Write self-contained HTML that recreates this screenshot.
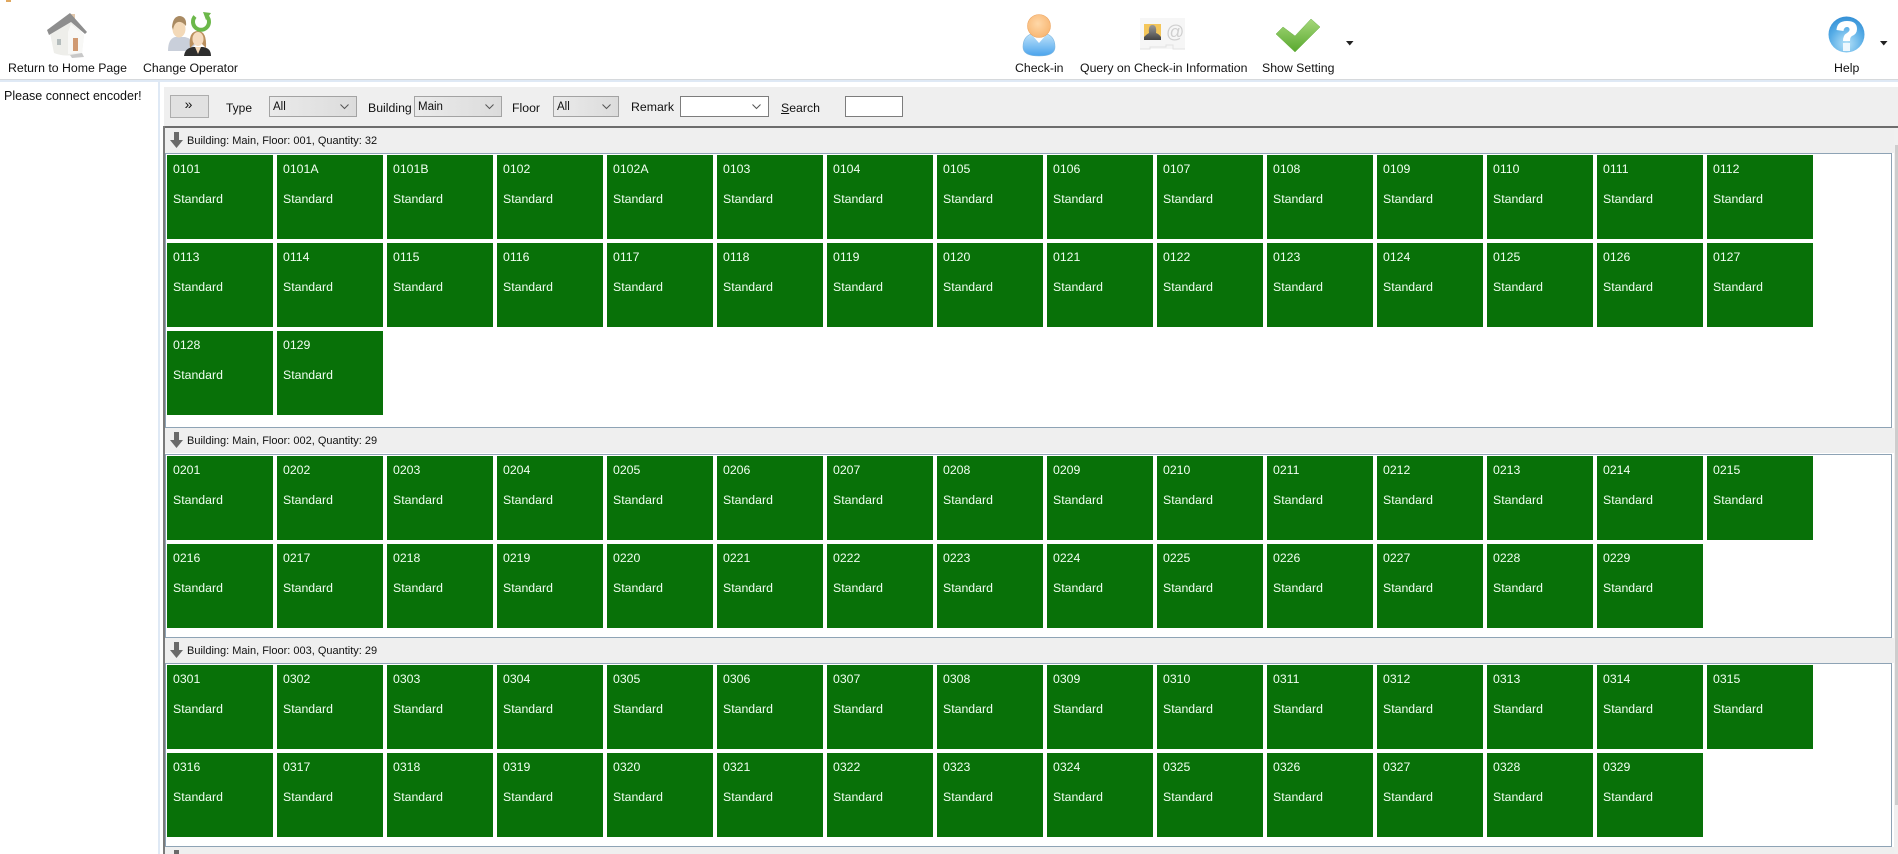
<!DOCTYPE html>
<html><head><meta charset="utf-8"><style>
html,body{margin:0;padding:0;width:1898px;height:854px;overflow:hidden;background:#fff}
body{font-family:"Liberation Sans",sans-serif;font-size:12.3px;color:#111;position:relative}
.a{position:absolute;white-space:nowrap}
.l{position:absolute;white-space:nowrap;line-height:14px}
svg{position:absolute;overflow:visible}
.combo{position:absolute;top:96px;height:19px;border:1px solid #a3a3a3;background:linear-gradient(90deg,#eaeaea,#dcdcdc);font-size:11.5px;line-height:21px;padding-left:3px;box-sizing:content-box}
.combo svg{right:7px;top:7px}
.hdr{position:absolute;left:165px;width:1729px;height:25px;background:#efefef}
.hdr span{position:absolute;left:22px;top:6px;font-size:11px;line-height:14px;white-space:nowrap}
.hdr svg{left:5px;top:4px}
.p{position:absolute;left:165px;width:1725px;border:1px solid #8ea3b5;background:#fff;box-sizing:content-box}
.g{position:absolute;left:1px;top:1px;width:1740px;display:flex;flex-wrap:wrap;gap:4px 4px}
.g b{display:block;position:relative;width:106px;height:84px;background:#087108;color:#f2fff2;font-weight:normal;font-size:12.3px;flex:none}
.g b s{text-decoration:none;position:absolute;left:6px;top:7px;line-height:15px}
.g b i{font-style:normal;position:absolute;left:6px;top:37px;line-height:15px}
</style></head><body>

<div class="a" style="left:6px;top:0;width:5px;height:2px;background:#e0a860"></div>

<svg style="left:46px;top:12px" width="42" height="46" viewBox="0 0 42 46">
<rect x="24" y="2" width="5" height="6" fill="#e2c8ac"/>
<path d="M4 21 L8 41 Q20 46 36 41 L38 23 L24 9 Z" fill="#eeeeea"/>
<path d="M22 42 L36 41 L38 23 L25 12 L22 20Z" fill="#f8f8f6"/>
<path d="M1 18 L24 1 L41 20 L39 22 L25 10 L3 23 Z" fill="#8e8e8e"/>
<rect x="27" y="26" width="5" height="13" fill="#d09a72"/>
<rect x="11" y="27" width="4" height="6" fill="#b4bcbc"/>
<path d="M24 43 L36 41 L38 45 L26 46Z" fill="#c8c8c8"/>
</svg>
<svg style="left:167px;top:12px" width="46" height="46" viewBox="0 0 46 46">
<path d="M1 39 Q1 27 8 25 L18 25 Q26 27 28 33 L22 39 Z" fill="#c9cfda"/>
<ellipse cx="12" cy="17" rx="6.500" ry="8.500" fill="#f3d9b8"/>
<path d="M5 15 Q6 4 13 4 Q20 5 19 14 Q15 9 11 10 Q7 11 6 18Z" fill="#a98a62"/>
<path d="M17 44 Q18 36 26 35 L36 35 Q44 36 44 44Z" fill="#2e2e2e"/>
<path d="M28 35 L31 42 L34 35Z" fill="#f3d7b6"/>
<path d="M23 36 Q21 19 31 19 Q40 19 39 36 L35 32 L27 32Z" fill="#bb905e"/>
<ellipse cx="31" cy="27" rx="5.500" ry="7" fill="#f6dcc0"/>
<path d="M28 4.500 A8 8 0 1 0 40 4.500" fill="none" stroke="#6cb84a" stroke-width="4"/>
<path d="M36 0 L44 1 L39 8Z" fill="#6cb84a"/>
</svg>
<svg style="left:1022px;top:13px" width="34" height="44" viewBox="0 0 34 44">
<defs>
<linearGradient id="bl" x1="0" y1="0" x2="0" y2="1"><stop offset="0" stop-color="#bfe3fb"/><stop offset="1" stop-color="#4aa3ec"/></linearGradient>
<radialGradient id="fc" cx=".45" cy=".4" r=".7"><stop offset="0" stop-color="#ffd8a8"/><stop offset="1" stop-color="#f7b26c"/></radialGradient>
</defs>
<path d="M1 34 Q1 24 9 21 L25 21 Q33 24 33 34 Q33 43 17 43 Q1 43 1 34Z" fill="url(#bl)" stroke="#7cb5de" stroke-width=".6"/>
<path d="M10 22 L17 30 L24 22Z" fill="#fff"/>
<circle cx="17" cy="13" r="11.5" fill="url(#fc)" stroke="#eda765" stroke-width=".6"/>
</svg>
<svg style="left:1140px;top:18px" width="46" height="34" viewBox="0 0 46 34">
<defs><linearGradient id="ps" x1="0" y1="0" x2="0" y2="1"><stop offset="0" stop-color="#9a9a9a"/><stop offset="1" stop-color="#444"/></linearGradient></defs>
<rect x="0" y="0" width="45" height="31" fill="#f6f6f6"/>
<rect x="4" y="6" width="17" height="16" fill="#f4c65a"/>
<path d="M4 22 L4 19 Q7 16 9 15 Q8 7 12.500 7 Q17 7 16 15 Q19 16 21 19 L21 22Z" fill="url(#ps)"/>
<text x="26" y="20" font-family="Liberation Sans" font-size="18" fill="#cfcfcf">@</text>
<path d="M0 31 H10 V29 H26 V27 H33 V31 H45" fill="none" stroke="#e2e2e2"/>
</svg>
<svg style="left:1275px;top:18px" width="46" height="36" viewBox="0 0 46 36">
<defs><linearGradient id="gr" x1="0" y1="0" x2="0" y2="1"><stop offset="0" stop-color="#a6d87a"/><stop offset="1" stop-color="#58a82e"/></linearGradient></defs>
<path d="M1 16 L8 9 L20 18 L36 1 L45 9 L20 34Z" fill="url(#gr)" stroke="#6eb04a" stroke-width=".5"/>
</svg>
<svg style="left:1828px;top:16px" width="38" height="38" viewBox="0 0 38 38">
<defs><radialGradient id="hp" cx=".5" cy=".75" r=".8"><stop offset="0" stop-color="#b6e2f8"/><stop offset=".6" stop-color="#56ace6"/><stop offset="1" stop-color="#2e8ad2"/></radialGradient></defs>
<circle cx="18.500" cy="18.500" r="18" fill="url(#hp)"/>
<path d="M8.500 14 Q9 5 19 5 Q29 5 29 13 Q29 18 24 20 Q22 21 22 25 H15 Q15 19 19 17 Q22 15 21.500 13 Q21 11 19 11 Q16 11 15.500 15Z" fill="#fff"/>
<rect x="15" y="27" width="7" height="8" fill="#eef8fe"/>
</svg>
<svg style="left:1346px;top:41px" width="8" height="5"><path d="M0 0H7.500L3.750 4.500Z" fill="#222"/></svg>
<svg style="left:1880px;top:41px" width="8" height="5"><path d="M0 0H7.500L3.750 4.500Z" fill="#222"/></svg>

<div class="l" style="left:8px;top:61px">Return to Home Page</div>
<div class="l" style="left:143px;top:61px">Change Operator</div>
<div class="l" style="left:1015px;top:61px">Check-in</div>
<div class="l" style="left:1080px;top:61px">Query on Check-in Information</div>
<div class="l" style="left:1262px;top:61px">Show Setting</div>
<div class="l" style="left:1834px;top:61px">Help</div>

<div class="a" style="left:0;top:79px;width:1898px;height:1px;background:#d6d9dc"></div>
<div class="a" style="left:0;top:80px;width:1898px;height:2px;background:#dfe9f5"></div>

<div class="l" style="left:4px;top:89px;font-size:12.5px">Please connect encoder!</div>

<div class="a" style="left:158px;top:82px;width:2px;height:772px;background:#dfe9f5"></div>
<div class="a" style="left:164px;top:87px;width:1734px;height:39px;background:#efefef"></div>
<div class="a" style="left:163px;top:126px;width:1735px;height:2px;background:#6d6d6d"></div>
<div class="a" style="left:163px;top:126px;width:2px;height:728px;background:#7b7b7b"></div>

<div class="a" style="left:170px;top:95px;width:37px;height:21px;border:1px solid #adadad;background:#e1e1e1;font-size:14px;line-height:17px;text-align:center;text-indent:-2px">»</div>
<div class="l" style="left:226px;top:101px;font-size:12px">Type</div>
<div class="combo" style="left:269px;width:83px">All<svg width="9" height="5"><path d="M0.500 0.500L4.500 4.500L8.500 0.500" fill="none" stroke="#555"/></svg></div>
<div class="l" style="left:368px;top:101px">Building</div>
<div class="combo" style="left:414px;width:83px">Main<svg width="9" height="5"><path d="M0.500 0.500L4.500 4.500L8.500 0.500" fill="none" stroke="#555"/></svg></div>
<div class="l" style="left:512px;top:101px">Floor</div>
<div class="combo" style="left:553px;width:61px">All<svg width="9" height="5"><path d="M0.500 0.500L4.500 4.500L8.500 0.500" fill="none" stroke="#555"/></svg></div>
<div class="l" style="left:631px;top:100px">Remark</div>
<div class="combo" style="left:680px;width:84px;background:#fff;border-color:#7d7d7d"><svg width="9" height="5"><path d="M0.500 0.500L4.500 4.500L8.500 0.500" fill="none" stroke="#555"/></svg></div>
<div class="l" style="left:781px;top:101px"><u>S</u>earch</div>
<div class="a" style="left:845px;top:96px;width:56px;height:19px;border:1px solid #7d7d7d;background:#fff"></div>

<div class="a" style="left:1894px;top:128px;width:4px;height:726px;background:#f0f0f0"></div>
<div class="a" style="left:1895px;top:145px;width:3px;height:660px;background:#cdcdcd"></div>

<div class="hdr" style="top:128px"><svg width="13" height="16" viewBox="0 0 13 16"><path d="M4 0H9V8H13L6.500 16L0 8H4Z" fill="#6a6a6a"/></svg><span>Building: Main, Floor: 001, Quantity: 32</span></div>
<div class="p" style="top:153px;height:273px"><div class="g">
<b><s>0101</s><i>Standard</i></b><b><s>0101A</s><i>Standard</i></b><b><s>0101B</s><i>Standard</i></b><b><s>0102</s><i>Standard</i></b><b><s>0102A</s><i>Standard</i></b><b><s>0103</s><i>Standard</i></b><b><s>0104</s><i>Standard</i></b><b><s>0105</s><i>Standard</i></b><b><s>0106</s><i>Standard</i></b><b><s>0107</s><i>Standard</i></b><b><s>0108</s><i>Standard</i></b><b><s>0109</s><i>Standard</i></b><b><s>0110</s><i>Standard</i></b><b><s>0111</s><i>Standard</i></b><b><s>0112</s><i>Standard</i></b>
<b><s>0113</s><i>Standard</i></b><b><s>0114</s><i>Standard</i></b><b><s>0115</s><i>Standard</i></b><b><s>0116</s><i>Standard</i></b><b><s>0117</s><i>Standard</i></b><b><s>0118</s><i>Standard</i></b><b><s>0119</s><i>Standard</i></b><b><s>0120</s><i>Standard</i></b><b><s>0121</s><i>Standard</i></b><b><s>0122</s><i>Standard</i></b><b><s>0123</s><i>Standard</i></b><b><s>0124</s><i>Standard</i></b><b><s>0125</s><i>Standard</i></b><b><s>0126</s><i>Standard</i></b><b><s>0127</s><i>Standard</i></b>
<b><s>0128</s><i>Standard</i></b><b><s>0129</s><i>Standard</i></b>
</div></div>

<div class="hdr" style="top:428px"><svg width="13" height="16" viewBox="0 0 13 16"><path d="M4 0H9V8H13L6.500 16L0 8H4Z" fill="#6a6a6a"/></svg><span>Building: Main, Floor: 002, Quantity: 29</span></div>
<div class="p" style="top:454px;height:182px"><div class="g">
<b><s>0201</s><i>Standard</i></b><b><s>0202</s><i>Standard</i></b><b><s>0203</s><i>Standard</i></b><b><s>0204</s><i>Standard</i></b><b><s>0205</s><i>Standard</i></b><b><s>0206</s><i>Standard</i></b><b><s>0207</s><i>Standard</i></b><b><s>0208</s><i>Standard</i></b><b><s>0209</s><i>Standard</i></b><b><s>0210</s><i>Standard</i></b><b><s>0211</s><i>Standard</i></b><b><s>0212</s><i>Standard</i></b><b><s>0213</s><i>Standard</i></b><b><s>0214</s><i>Standard</i></b><b><s>0215</s><i>Standard</i></b>
<b><s>0216</s><i>Standard</i></b><b><s>0217</s><i>Standard</i></b><b><s>0218</s><i>Standard</i></b><b><s>0219</s><i>Standard</i></b><b><s>0220</s><i>Standard</i></b><b><s>0221</s><i>Standard</i></b><b><s>0222</s><i>Standard</i></b><b><s>0223</s><i>Standard</i></b><b><s>0224</s><i>Standard</i></b><b><s>0225</s><i>Standard</i></b><b><s>0226</s><i>Standard</i></b><b><s>0227</s><i>Standard</i></b><b><s>0228</s><i>Standard</i></b><b><s>0229</s><i>Standard</i></b>
</div></div>

<div class="hdr" style="top:638px"><svg width="13" height="16" viewBox="0 0 13 16"><path d="M4 0H9V8H13L6.500 16L0 8H4Z" fill="#6a6a6a"/></svg><span>Building: Main, Floor: 003, Quantity: 29</span></div>
<div class="p" style="top:663px;height:182px"><div class="g">
<b><s>0301</s><i>Standard</i></b><b><s>0302</s><i>Standard</i></b><b><s>0303</s><i>Standard</i></b><b><s>0304</s><i>Standard</i></b><b><s>0305</s><i>Standard</i></b><b><s>0306</s><i>Standard</i></b><b><s>0307</s><i>Standard</i></b><b><s>0308</s><i>Standard</i></b><b><s>0309</s><i>Standard</i></b><b><s>0310</s><i>Standard</i></b><b><s>0311</s><i>Standard</i></b><b><s>0312</s><i>Standard</i></b><b><s>0313</s><i>Standard</i></b><b><s>0314</s><i>Standard</i></b><b><s>0315</s><i>Standard</i></b>
<b><s>0316</s><i>Standard</i></b><b><s>0317</s><i>Standard</i></b><b><s>0318</s><i>Standard</i></b><b><s>0319</s><i>Standard</i></b><b><s>0320</s><i>Standard</i></b><b><s>0321</s><i>Standard</i></b><b><s>0322</s><i>Standard</i></b><b><s>0323</s><i>Standard</i></b><b><s>0324</s><i>Standard</i></b><b><s>0325</s><i>Standard</i></b><b><s>0326</s><i>Standard</i></b><b><s>0327</s><i>Standard</i></b><b><s>0328</s><i>Standard</i></b><b><s>0329</s><i>Standard</i></b>
</div></div>

<div class="hdr" style="top:847px;height:7px"><svg style="left:5px;top:3px" width="13" height="16" viewBox="0 0 13 16"><path d="M4 0H9V8H13L6.500 16L0 8H4Z" fill="#6a6a6a"/></svg></div>
</body></html>
